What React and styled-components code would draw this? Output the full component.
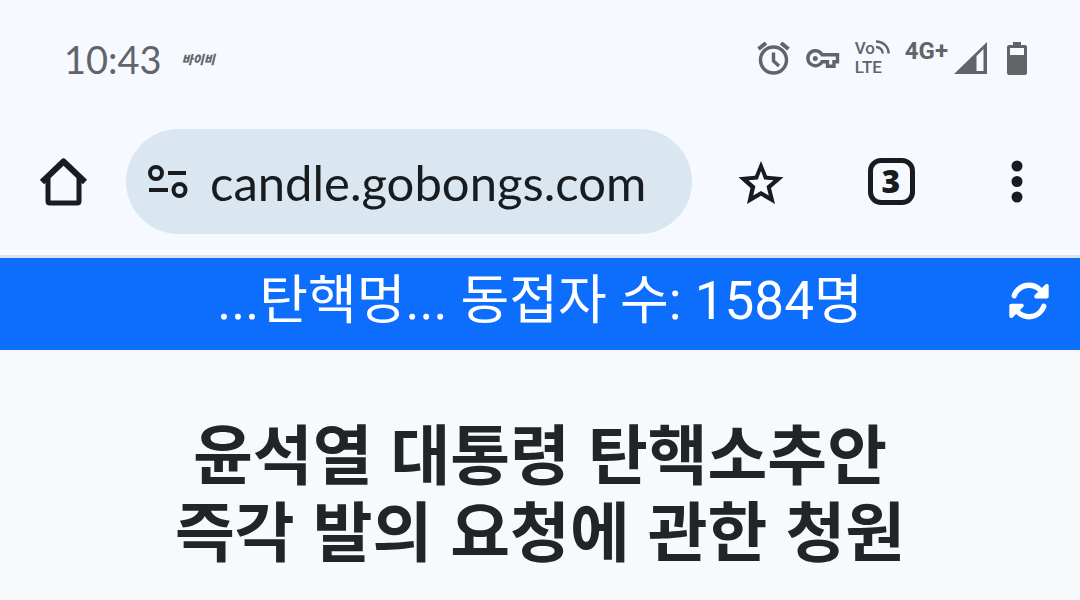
import React, { useState } from 'react';
import styled, { createGlobalStyle } from 'styled-components';
import { FaRotate } from 'react-icons/fa6';

const GlobalStyle = createGlobalStyle`
  * {
    box-sizing: border-box;
  }

  body {
    margin: 0;
    background: #f8f9fa;
    font-family: Roboto, 'Noto Sans CJK KR', sans-serif;
  }

  button {
    padding: 0;
    border: 0;
    background: none;
    color: inherit;
    font: inherit;
    cursor: pointer;
  }

  svg {
    display: block;
    flex-shrink: 0;
  }
`;

const BrowserTop = styled.header`
  background: #f6f9ff;
  border-bottom: 3px solid #d8e4ec;
`;

const StatusBar = styled.div`
  display: flex;
  justify-content: space-between;
  height: 118px;
  padding: 0 53px 0 64px;
  color: #626467;
`;

const StatusGroup = styled.div`
  display: flex;
  align-items: center;
  height: 118px;
  gap: ${(props) => props.$gap}px;
`;

const Clock = styled.time`
  font-family: Lato, sans-serif;
  font-size: 38px;
  line-height: 48px;
`;

const Carrier = styled.span`
  font-family: 'Noto Sans CJK KR', sans-serif;
  font-size: 12px;
  font-style: italic;
  font-weight: 900;
  line-height: 16px;
`;

const VoLte = styled.div`
  display: grid;
  grid-template-columns: auto auto;
  align-items: start;
  width: 35px;
  padding-bottom: 2px;
  font-size: 17px;
  font-weight: 500;
  line-height: 19px;

  > .lte {
    grid-column: 1 / 3;
  }
`;

const Network = styled.div`
  display: flex;
  align-items: center;
  gap: 6px;

  > .label {
    padding-bottom: 16px;
    font-size: 24px;
    font-weight: 700;
    line-height: 28px;
  }
`;

const Battery = styled.div`
  margin-left: 4px;
`;

const Toolbar = styled.div`
  display: flex;
  align-items: center;
  padding: 11px 35px 21px 32px;
  color: #191c1f;
`;

const ToolButton = styled.button`
  display: flex;
  align-items: center;
  justify-content: center;
  flex-shrink: 0;
  width: ${(props) => props.$width || 64}px;
  height: 64px;
`;

const AddressBar = styled.div`
  flex: 1;
  display: flex;
  align-items: center;
  min-width: 0;
  height: 105px;
  margin: 0 37px 0 30px;
  padding: 0 36px 0 20px;
  border-radius: 53px;
  background: #dae7f0;
`;

const AddressInput = styled.input`
  flex: 1;
  min-width: 0;
  margin-left: 22px;
  padding: 0;
  border: 0;
  outline: 0;
  background: none;
  color: #191c1f;
  font-family: Lato, sans-serif;
  font-size: 49px;
  line-height: 64px;
`;

const Actions = styled.div`
  display: flex;
  gap: 66px;
`;

const TabCount = styled.span`
  width: 47px;
  height: 47px;
  border: 5px solid #191c1f;
  border-radius: 13px;
  font-family: 'Noto Sans', sans-serif;
  font-size: 32px;
  font-weight: 900;
  line-height: 36px;
  text-align: center;
`;

const Banner = styled.div`
  display: grid;
  grid-template-columns: 72px 1fr 72px;
  align-items: center;
  height: 92px;
  padding: 0 15px 6px;
  background: #0d6efd;
  color: #fff;
`;

const BannerText = styled.p`
  grid-column: 2;
  margin: 0;
  font-size: 53px;
  line-height: 76px;
  text-align: center;
  white-space: nowrap;
`;

const Main = styled.main`
  padding: 68px 24px 24px;
`;

const Title = styled.h1`
  margin: 0;
  color: #212529;
  font-family: 'Liberation Sans', 'Noto Sans CJK KR', sans-serif;
  font-size: 65px;
  font-weight: 700;
  line-height: 77px;
  text-align: center;
`;

const AlarmIcon = () => (
  <svg width='34' height='34' viewBox='0 0 34 34' fill='none' stroke='currentColor'>
    <circle cx='16.500' cy='18' r='13' strokeWidth='3.400' />
    <path d='M1.500 7 9 1M24 1l7.500 6' strokeWidth='4' />
    <path d='M16.500 10.500v8.500l5.500 5' strokeWidth='3.400' />
  </svg>
);

const KeyIcon = () => (
  <svg width='34' height='20' viewBox='0 0 34 20'>
    <path
      fill='none'
      stroke='currentColor'
      strokeWidth='3.400'
      d='M16 5.700h15.500v7H28v4.600h-6.500v-4.600H16A7.500 7.500 0 1 1 16 5.700Z'
    />
    <circle cx='9.300' cy='9.500' r='2.500' fill='currentColor' />
  </svg>
);

const CastIcon = () => (
  <svg width='15' height='16' viewBox='0 0 15 16' fill='none' stroke='currentColor' strokeWidth='2.4'>
    <path d='M1 2.500c7 0 12.600 5 12.600 12' />
    <path d='M1 8c3.800 0 6.800 3 6.800 6.500' />
  </svg>
);

const SignalIcon = () => (
  <svg width='34' height='34' viewBox='0 0 34 34'>
    <path fill='currentColor' fillRule='evenodd' d='M0 32 33 0v32ZM22.500 14v15h7V7Z' />
  </svg>
);

const BatteryIcon = () => (
  <svg width='20' height='34' viewBox='0 0 20 34'>
    <path
      fill='currentColor'
      fillRule='evenodd'
      d='M6 0h8v3H18a2 2 0 0 1 2 2V31a2 2 0 0 1-2 2H2a2 2 0 0 1-2-2V5a2 2 0 0 1 2-2h4ZM3 6v7h14V6Z'
    />
  </svg>
);

const HomeIcon = () => (
  <svg width='48' height='48' viewBox='0 0 48 48' fill='none' stroke='currentColor'>
    <path d='M2 24 23.500 3.500l21.500 20.500' strokeWidth='6' strokeLinejoin='round' />
    <path d='M8 19v24q0 2 2 2h27q2 0 2-2V19' strokeWidth='5' />
  </svg>
);

const SiteInfoIcon = () => (
  <svg width='42' height='36' viewBox='0 0 42 36' fill='none' stroke='currentColor' strokeWidth='4'>
    <circle cx='10' cy='9' r='6' />
    <path d='M22 9h18M3 26h19' />
    <circle cx='33.500' cy='26' r='6' />
  </svg>
);

const StarIcon = () => (
  <svg width='46' height='46' viewBox='0 0 46 46'>
    <path
      fill='currentColor'
      fillRule='evenodd'
      d='M23 2 29 16.700 45.500 18.200 33 29 37 45 23 36.800 9 45 12.500 29 .5 18.200 17 16.700ZM23 12 19.800 20.500 10.500 21.200 17.400 27.200 15.200 36.500 23 32 30.800 36.500 28.500 27.200 35.500 21.200 26.200 20.500Z'
    />
  </svg>
);

const MoreIcon = () => (
  <svg width='12' height='44' viewBox='0 0 12 44' fill='currentColor'>
    <circle cx='6' cy='6' r='5.500' />
    <circle cx='6' cy='21.500' r='5.500' />
    <circle cx='6' cy='37' r='5.500' />
  </svg>
);

const App = () => {
  const [url, setUrl] = useState('candle.gobongs.com');
  const visitors = 1584;

  return (
    <>
      <GlobalStyle />
      <BrowserTop>
        <StatusBar>
          <StatusGroup $gap={20}>
            <Clock>10:43</Clock>
            <Carrier>바이비</Carrier>
          </StatusGroup>
          <StatusGroup $gap={15}>
            <AlarmIcon />
            <KeyIcon />
            <VoLte>
              <span>Vo</span>
              <CastIcon />
              <span className='lte'>LTE</span>
            </VoLte>
            <Network>
              <span className='label'>4G+</span>
              <SignalIcon />
            </Network>
            <Battery>
              <BatteryIcon />
            </Battery>
          </StatusGroup>
        </StatusBar>
        <Toolbar>
          <ToolButton aria-label='홈'>
            <HomeIcon />
          </ToolButton>
          <AddressBar>
            <ToolButton $width={42} aria-label='사이트 정보'>
              <SiteInfoIcon />
            </ToolButton>
            <AddressInput
              aria-label='주소'
              value={url}
              onChange={(e) => setUrl(e.target.value)}
            />
          </AddressBar>
          <Actions>
            <ToolButton aria-label='북마크'>
              <StarIcon />
            </ToolButton>
            <ToolButton>
              <TabCount>3</TabCount>
            </ToolButton>
            <ToolButton $width={56} aria-label='더보기'>
              <MoreIcon />
            </ToolButton>
          </Actions>
        </Toolbar>
      </BrowserTop>
      <Banner>
        <BannerText>...탄핵멍... 동접자 수: {visitors}명</BannerText>
        <ToolButton $width={72} aria-label='새로고침'>
          <FaRotate size={42} />
        </ToolButton>
      </Banner>
      <Main>
        <Title>
          윤석열 대통령 탄핵소추안
          <br />
          즉각 발의 요청에 관한 청원
        </Title>
      </Main>
    </>
  );
};

export default App;
